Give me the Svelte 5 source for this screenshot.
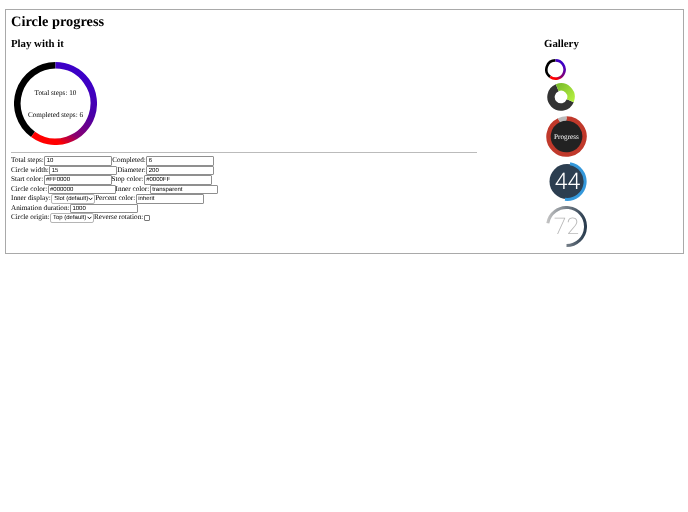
<script>
	const rows = [
		[
			{ label: 'Total steps:', value: '10' },
			{ label: 'Completed:', value: '6' }
		],
		[
			{ label: 'Circle width:', value: '15' },
			{ label: 'Diameter:', value: '200' }
		],
		[
			{ label: 'Start color:', value: '#FF0000' },
			{ label: 'Stop color:', value: '#0000FF' }
		],
		[
			{ label: 'Circle color:', value: '#000000' },
			{ label: 'Inner color:', value: 'transparent' }
		]
	];

	// path for a ring segment, angles in degrees clockwise from the top
	function arc(c, r, from, to) {
		const pt = (a) => {
			const t = ((a - 90) * Math.PI) / 180;
			return `${(c + r * Math.cos(t)).toFixed(2)} ${(c + r * Math.sin(t)).toFixed(2)}`;
		};
		const large = to - from > 180 ? 1 : 0;
		return `M${pt(from)}A${r} ${r} 0 ${large} 1 ${pt(to)}`;
	}
</script>

<div class="box">
	<h1>Circle progress</h1>
	<div class="columns">
		<div class="play">
			<h2>Play with it</h2>
			<div class="ring main">
				<svg width="83" height="83" viewBox="0 0 83 83">
					<defs>
						<linearGradient id="mainGrad" gradientUnits="userSpaceOnUse" x1="70" y1="15" x2="28" y2="83">
							<stop offset="0" stop-color="#3c00c8" />
							<stop offset="0.35" stop-color="#4a00a8" />
							<stop offset="0.68" stop-color="#8a0070" />
							<stop offset="0.86" stop-color="#ff0000" />
						</linearGradient>
					</defs>
					<path d={arc(41.5, 38.2, 216, 360)} fill="none" stroke="#000" stroke-width="6.6" />
					<path d={arc(41.5, 38.2, 0, 216)} fill="none" stroke="url(#mainGrad)" stroke-width="6.6" />
				</svg>
				<div class="inner">
					<p>Total steps: 10</p>
					<p>Completed steps: 6</p>
				</div>
			</div>
			<hr />
			<form>
				{#each rows as row}
					<div class="row">
						{#each row as f}
							<label>{f.label}<input type="text" value={f.value} /></label>
						{/each}
					</div>
				{/each}
				<div class="row">
					<label>Inner display:<select class="sel-slot"><option>Slot (default)</option></select></label>
					<label>Percent color:<input type="text" value="inherit" /></label>
				</div>
				<div class="row">
					<label>Animation duration:<input type="text" value="1000" /></label>
				</div>
				<div class="row">
					<label>Circle origin:<select class="sel-top"><option>Top (default)</option></select></label>
					<label>Reverse rotation: <input type="checkbox" class="check" /></label>
				</div>
			</form>
		</div>

		<div class="gallery">
			<h2>Gallery</h2>
			<div class="ring g1">
				<svg width="21" height="21" viewBox="0 0 21 21">
					<defs>
						<linearGradient id="g1Grad" gradientUnits="userSpaceOnUse" x1="17" y1="4" x2="6" y2="20">
							<stop offset="0" stop-color="#3c00c8" />
							<stop offset="0.6" stop-color="#8a0070" />
							<stop offset="0.85" stop-color="#ff0000" />
						</linearGradient>
					</defs>
					<path d={arc(10.5, 9.1, 216, 360)} fill="none" stroke="#000" stroke-width="2.6" />
					<path d={arc(10.5, 9.1, 0, 216)} fill="none" stroke="url(#g1Grad)" stroke-width="2.6" />
				</svg>
			</div>
			<div class="ring g2">
				<svg width="28" height="28" viewBox="0 0 28 28">
					<defs>
						<linearGradient id="g2Grad" gradientUnits="userSpaceOnUse" x1="8" y1="2" x2="26" y2="18">
							<stop offset="0" stop-color="#76b82a" />
							<stop offset="1" stop-color="#b5f040" />
						</linearGradient>
					</defs>
					<path d={arc(14, 10, 112, 338)} fill="none" stroke="#333" stroke-width="7.4" />
					<path d={arc(14, 10, -22, 112)} fill="none" stroke="url(#g2Grad)" stroke-width="7.4" />
				</svg>
			</div>
			<div class="ring g3">
				<svg width="41" height="41" viewBox="0 0 41 41">
					<circle cx="20.5" cy="20.5" r="17" fill="#222" />
					<path d={arc(20.5, 18, 0, 335)} fill="none" stroke="#c0392b" stroke-width="4.4" />
					<path d={arc(20.5, 18, -25, 0)} fill="none" stroke="#bbb" stroke-width="4.4" />
				</svg>
				<div class="inner light">Progress</div>
			</div>
			<div class="ring g4">
				<svg width="39" height="39" viewBox="0 0 39 39">
					<circle cx="19" cy="19.5" r="17.5" fill="#2c3e50" />
					<path d={arc(19.5, 18, 8, 188)} fill="none" stroke="#3498db" stroke-width="3" />
				</svg>
				<div class="inner num44">44</div>
			</div>
			<div class="ring g5">
				<svg width="41" height="41" viewBox="0 0 41 41">
					<defs>
						<linearGradient id="g5Grad" gradientUnits="userSpaceOnUse" x1="1" y1="0" x2="39" y2="0">
							<stop offset="0" stop-color="#c4c4c4" />
							<stop offset="1" stop-color="#2c3e50" />
						</linearGradient>
					</defs>
					<path d={arc(20.5, 19, -80, 180)} fill="none" stroke="url(#g5Grad)" stroke-width="3" />
				</svg>
				<div class="inner num72">72</div>
			</div>
		</div>
	</div>
</div>

<style>
	:global(body) {
		margin: 0;
		background: #fff;
	}

	.box {
		box-sizing: border-box;
		height: 245px;
		margin: 9px 4px 0 5px;
		padding: 0 5px;
		border: 1px solid #a9a9a9;
		font-family: 'Liberation Serif', 'Times New Roman', serif;
		font-size: 7.2px;
		color: #000;
		text-rendering: geometricPrecision;
		will-change: opacity;
	}

	h1 {
		margin: 4px 0 0;
		font-size: 14.4px;
		line-height: 17px;
	}

	h2 {
		margin: 0;
		font-size: 10.8px;
		line-height: 13px;
	}

	.columns {
		display: flex;
		margin-top: 7px;
	}

	.play {
		width: 466px;
	}

	.gallery {
		margin-left: 67px;
		display: flex;
		flex-direction: column;
		align-items: flex-start;
	}

	.ring {
		display: grid;
		place-items: center;
	}

	.ring > * {
		grid-area: 1 / 1;
	}

	.main {
		width: 83px;
		margin: 11px 0 0 3px;
	}

	.inner {
		text-align: center;
	}

	.inner p {
		margin: 0;
		line-height: 8px;
	}

	.inner p + p {
		margin-top: 14px;
	}

	hr {
		margin: 6.5px 0 3.5px;
		border: 0;
		border-top: 1px solid #bbb;
		height: 0;
	}

	.row {
		height: 9px;
		line-height: 9.5px;
		white-space: nowrap;
		display: flex;
	}

	.row:nth-child(odd) {
		height: 10px;
	}

	label {
		display: flex;
		align-items: stretch;
	}

	input[type='text'],
	select {
		box-sizing: border-box;
		margin: 0 0 0 0.4px;
		border: 0.5px solid #8f8f8f;
		border-radius: 1px;
		background-color: #fff;
		font-family: 'Liberation Sans', Arial, sans-serif;
		font-size: 6px;
		color: #000;
		outline: none;
		text-rendering: geometricPrecision;
	}

	input[type='text'] {
		width: 68px;
		padding: 0 1px 0 1.5px;
	}

	select {
		appearance: none;
		padding: 0 0 0 2px;
		border-color: #b5b5b5;
		border-radius: 2px;
		background-image: url("data:image/svg+xml,%3Csvg xmlns='http://www.w3.org/2000/svg' width='5' height='4' viewBox='0 0 5 4'%3E%3Cpath d='M.6.8l1.9 2 1.9-2' fill='none' stroke='%23000' stroke-width='.9'/%3E%3C/svg%3E");
		background-repeat: no-repeat;
		background-position: right 1px center;
	}

	.sel-slot,
	.sel-top {
		width: 44px;
	}

	.check {
		appearance: none;
		box-sizing: border-box;
		align-self: center;
		width: 6px;
		height: 6px;
		margin: 0 0 0 1px;
		border: 0.5px solid #767676;
		border-radius: 1px;
		background: #fff;
	}

	.g1 {
		margin: 8px 0 0 1px;
	}

	.g2 {
		margin: 3px 0 0 3px;
	}

	.g3 {
		margin: 5px 0 0 2px;
	}

	.g4 {
		margin: 5px 0 0 4px;
	}

	.g5 {
		margin: 5px 0 0 2px;
	}

	.light {
		color: #fff;
		font-weight: 500;
	}

	.num44 {
		color: #fff;
		font-family: Roboto, 'Liberation Sans', Arial, sans-serif;
		font-size: 23px;
		font-weight: 300;
	}

	.num72 {
		color: #b8b8b8;
		font-family: Roboto, 'Liberation Sans', Arial, sans-serif;
		font-size: 23px;
		font-weight: 200;
	}
</style>
